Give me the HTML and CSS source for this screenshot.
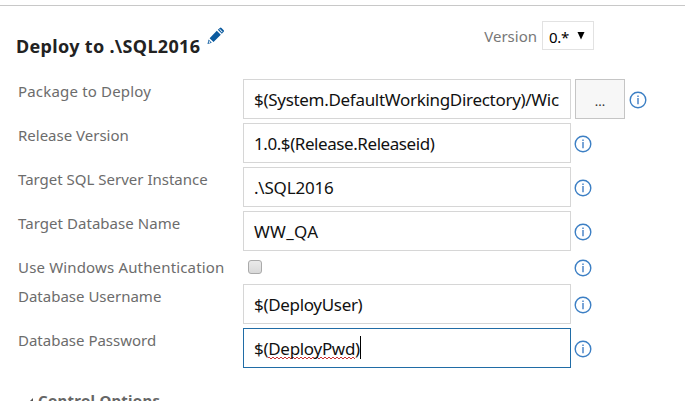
FILE: index.html
```html
<!DOCTYPE html>
<html lang="en">
<head>
<meta charset="utf-8">
<title>Deploy task</title>
<link rel="stylesheet" href="styles.css">
</head>
<body>
<svg class="defs" width="0" height="0" aria-hidden="true">
  <symbol id="info" viewBox="0 0 18 18">
    <circle cx="9" cy="9" r="7.8" fill="none" stroke="#3c7fc4" stroke-width="1.4"/>
    <path d="M8.1 4.600h1.800v1.400H8.100zM8.100 7h1.800v6.300H8.100z" fill="#6c9bd2"/>
  </symbol>
</svg>
<main class="panel">
  <header class="header">
    <h1 class="title">Deploy to .\SQL2016</h1>
    <svg class="pencil" width="18" height="18" viewBox="0 0 18 18"><path fill="#0a5a9f" d="M.5 17l1.100-4.600 3.200 3.400zM2.600 11.200L9.800 3.800l4 4-7.300 7.300zM10.800 2.800L12.900.9q.8-.7 1.600 0l2.200 2.300q.7.8 0 1.600l-1.900 2z"/><path fill="#fff" d="M2 13.800l1.500 1.700-1.200.4-.7-.7zM12.900 2l2.700 2.800-.6.6-2.700-2.800z"/></svg>
    <div class="version"><span class="version-label">Version</span><div class="select"><span>0.*</span><svg width="8" height="8" viewBox="0 0 8 8"><path d="M.5 0h7L4 7.500z" fill="#000"/></svg></div></div>
  </header>
  <form class="form">
    <div class="row"><label class="l1">Package to Deploy</label><div class="field"><span class="v1">$(System.DefaultWorkingDirectory)/Wic</span></div><button type="button" class="browse">...</button><svg class="info"><use href="#info"/></svg></div>
    <div class="row"><label class="l2">Release Version</label><div class="field"><span class="v2">1.0.$(Release.Releaseid)</span></div><svg class="info"><use href="#info"/></svg></div>
    <div class="row"><label class="l3">Target SQL Server Instance</label><div class="field"><span class="v3">.\SQL2016</span></div><svg class="info"><use href="#info"/></svg></div>
    <div class="row"><label class="l4">Target Database Name</label><div class="field"><span class="v4">WW_QA</span></div><svg class="info"><use href="#info"/></svg></div>
    <div class="row row-check"><label class="l5">Use Windows Authentication</label><div class="check-cell"><span class="check"></span></div><svg class="info"><use href="#info"/></svg></div>
    <div class="row"><label class="l6">Database Username</label><div class="field"><span class="v5">$(DeployUser)</span></div><svg class="info"><use href="#info"/></svg></div>
    <div class="row"><label class="l7">Database Password</label><div class="field focused"><span class="v6">$(<span class="typo">DeployPwd</span>)</span><i class="caret"></i></div><svg class="info"><use href="#info"/></svg></div>
  </form>
  <div class="section"><svg width="8" height="8" viewBox="0 0 8 8"><path d="M8 0v8H0z" fill="#555"/></svg><span>Control Options</span></div>
</main>
</body>
</html>
```
FILE: styles.css
```css
* { box-sizing: border-box; }
body { margin: 0; background: #fff; font-family: "Noto Sans", "Open Sans", sans-serif; }
.defs { position: absolute; }
.panel { width: 689px; height: 401px; overflow: hidden; padding-top: 5px; }
.header { display: flex; width: 685px; height: 74px; border-top: 1px solid #c8c8c8; padding-left: 16px; }
.title { margin: 27px 0 0; font-size: 18px; line-height: 27px; font-weight: 700; color: #222; white-space: nowrap; width: 185px; letter-spacing: 0.32px; }
.pencil { margin: 21px 0 0 6px; }
.version { display: flex; margin: 15px 0 0 auto; padding-right: 91px; height: 29px; }
.version-label { font-size: 15px; line-height: 30px; color: #777; margin-right: 5px; }
.select { width: 52px; height: 29px; border: 1px solid #e2e2e2; display: flex; padding: 0 8px 0 6px; justify-content: space-between; font-size: 15px; letter-spacing: -0.3px; line-height: 30px; }
.select svg { margin-top: 10px; }
.row { display: flex; height: 44px; padding-left: 18px; }
.row label { width: 225px; flex: none; font-size: 15px; line-height: 24px; color: #6c6c6c; white-space: nowrap; }
.row .l1 { letter-spacing: 0.18px; }
.row .l4 { letter-spacing: 0.05px; }
.row .l5 { letter-spacing: 0.16px; }
.field { width: 328px; height: 40px; flex: none; border: 1px solid #d6d6d6; padding: 0 11px 0 10px; display: flex; font-size: 17px; line-height: 40px; color: #111; }
.field > span { white-space: nowrap; }
.v1 { letter-spacing: -0.3px; }
.v2 { letter-spacing: -0.43px; }
.v3 { letter-spacing: -0.2px; }
.v4 { letter-spacing: 0.3px; }
.v5 { letter-spacing: -0.32px; }
.v6 { letter-spacing: -0.3px; }
.focused { border-color: #206ca6; }
.typo {
  background-image: linear-gradient(90deg, #c83232 50%, transparent 50%), linear-gradient(90deg, transparent 50%, #c83232 50%);
  background-size: 4px 1px, 4px 1px;
  background-position: 0 calc(100% - 2px), 0 calc(100% - 1px);
  background-repeat: repeat-x;
}
.caret { width: 1px; height: 23px; margin-top: 7px; background: #000; }
.browse { width: 50px; height: 40px; margin-left: 4px; border: 1px solid #c5c5c5; background: #f7f7f7; color: #333; font: 13px "Noto Sans", sans-serif; padding: 3px 0 0; }
.info { width: 18px; height: 18px; margin: 12px 0 0 3px; flex: none; }
.browse + .info { margin-left: 4px; }
.row-check { height: 29px; }
.row-check label { line-height: 25px; }
.row-check .info { margin-top: 4px; }
.check-cell { width: 328px; padding: 5px 0 0 5px; }
.check { display: block; width: 14px; height: 14px; border: 1px solid #aaa; border-radius: 3px; background: linear-gradient(#eaeaea, #d9d9d9); }
.section { display: flex; margin-top: 16px; padding-left: 25px; font-size: 15px; line-height: 24px; font-weight: 700; color: #666; letter-spacing: 0.25px; }
.section svg { margin: 10px 5px 0 0; }
```
